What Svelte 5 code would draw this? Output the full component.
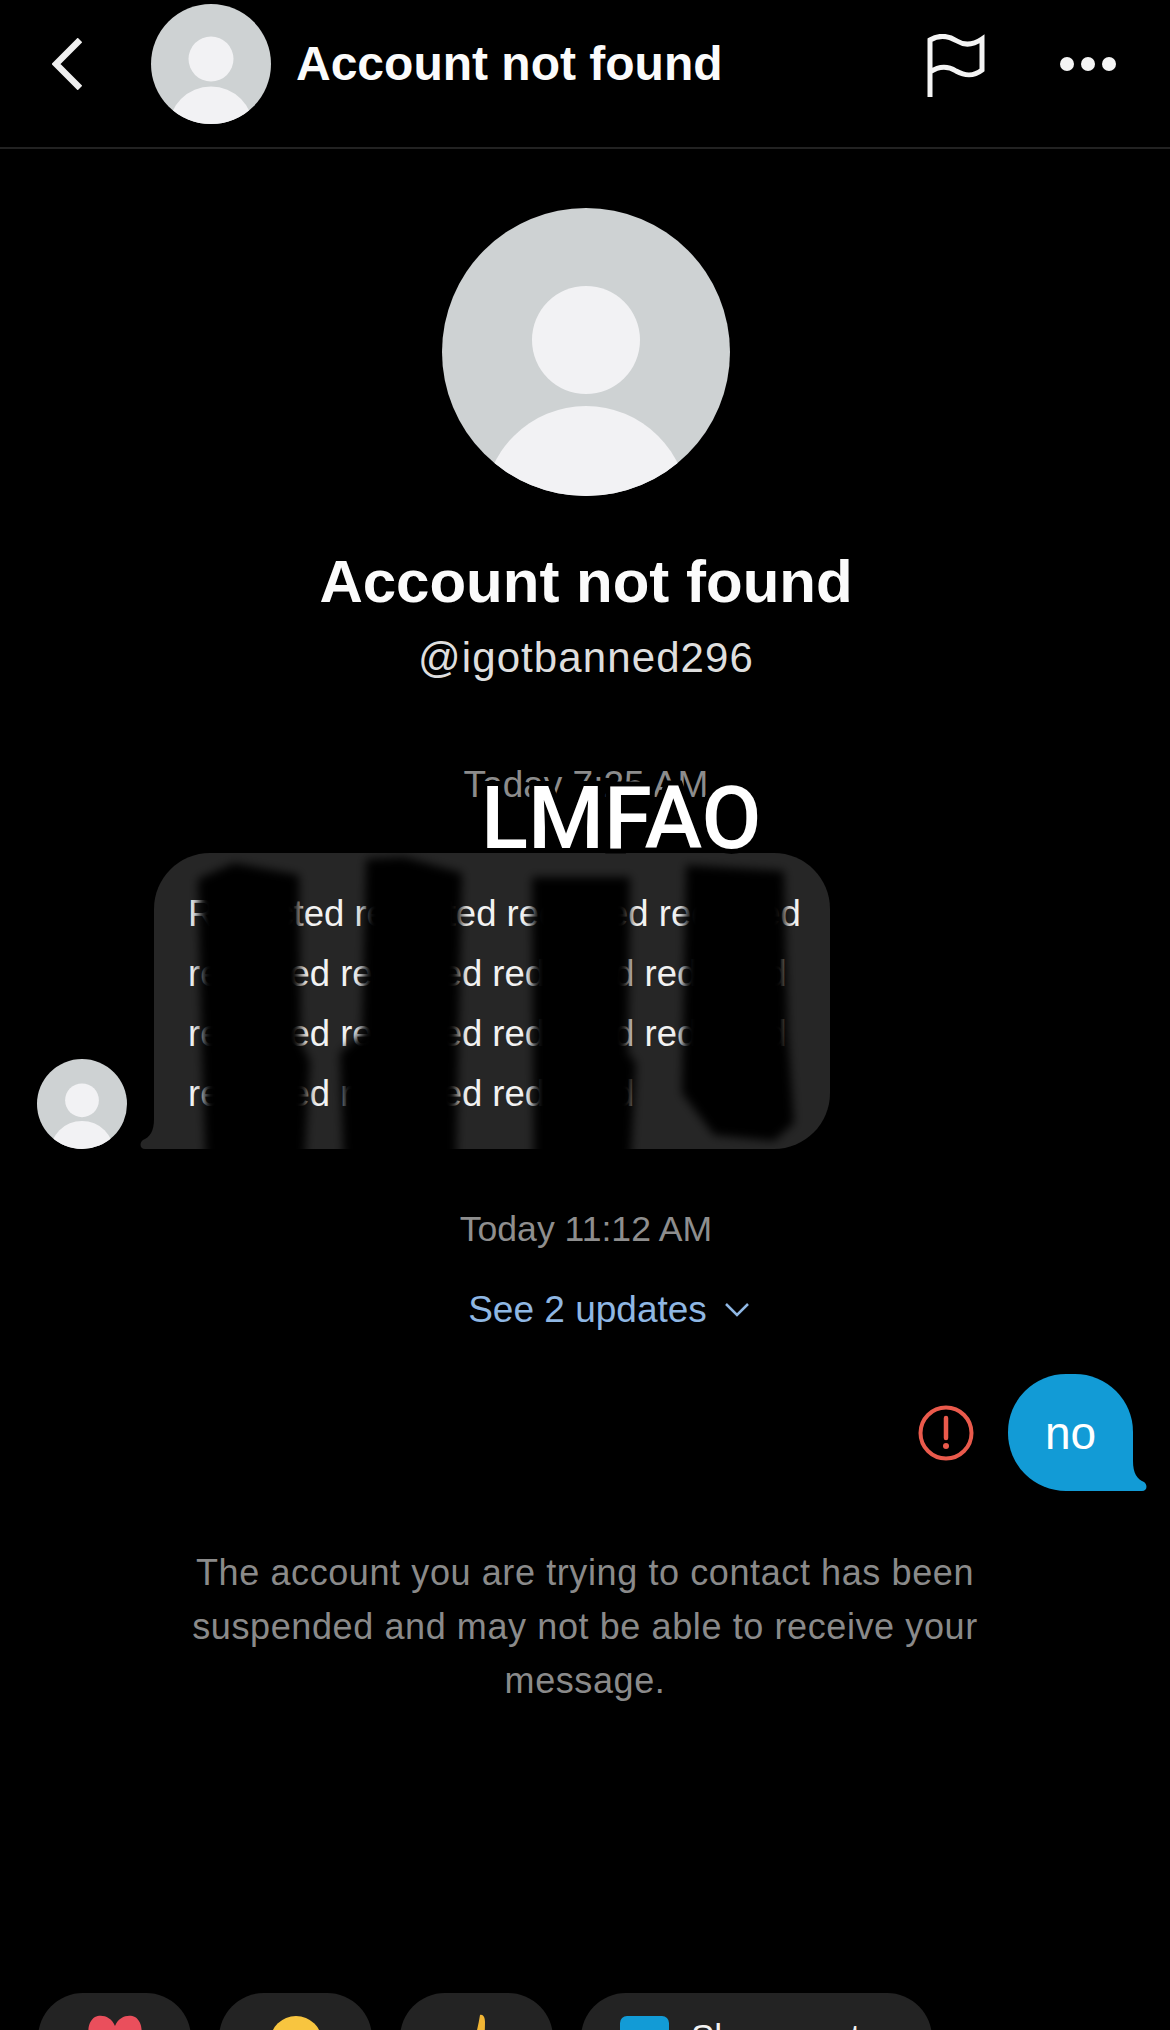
<script>
  // the repeated word in the received message is masked on purpose
  const lines = [
    'Redacted redacted redacted redacted',
    'redacted redacted redacted redacted',
    'redacted redacted redacted redacted',
    'redacted redacted redacted'
  ];
</script>

<div class="page">
  <header class="topbar">
    <svg class="back" viewBox="0 0 30 52" width="30" height="52" fill="none" stroke="#efefef" stroke-width="6.5">
      <path d="M28 2 L4 26 L28 50" />
    </svg>
    <svg class="avatar-sm" viewBox="0 0 288 288" width="120" height="120">
      <circle cx="144" cy="144" r="144" fill="#ced2d3" />
      <circle cx="144" cy="132" r="54" fill="#f2f2f4" />
      <clipPath id="clip-top"><circle cx="144" cy="144" r="144" /></clipPath>
      <circle cx="144" cy="300" r="102" fill="#f2f2f4" clip-path="url(#clip-top)" />
    </svg>
    <h1 class="topbar-title">Account not found</h1>
    <svg class="flag" viewBox="0 0 58 64" width="58" height="64" fill="none" stroke="#f4f4f4" stroke-width="5">
      <path d="M3 63 V6 C13 0 22 2 30 7 C38 12 46 11 55 5 V36 C46 43 38 42 29 37 C21 32 12 32 3 38" />
    </svg>
    <div class="dots"><span></span><span></span><span></span></div>
  </header>

  <section class="profile">
    <svg class="avatar-lg" viewBox="0 0 288 288" width="288" height="288">
      <circle cx="144" cy="144" r="144" fill="#ced2d3" />
      <circle cx="144" cy="132" r="54" fill="#f2f2f4" />
      <clipPath id="clip-main"><circle cx="144" cy="144" r="144" /></clipPath>
      <circle cx="144" cy="300" r="102" fill="#f2f2f4" clip-path="url(#clip-main)" />
    </svg>
    <h2 class="name">Account not found</h2>
    <p class="handle">@igotbanned296</p>
  </section>

  <section class="thread">
    <p class="stamp first">Today 7:25 AM</p>

    <div class="incoming">
      <svg class="avatar-xs" viewBox="0 0 288 288" width="90" height="90">
        <circle cx="144" cy="144" r="144" fill="#ced2d3" />
        <circle cx="144" cy="132" r="54" fill="#f2f2f4" />
        <clipPath id="clip-xs"><circle cx="144" cy="144" r="144" /></clipPath>
        <circle cx="144" cy="300" r="102" fill="#f2f2f4" clip-path="url(#clip-xs)" />
      </svg>
      <div class="bubble-in">
        <svg class="tail-in" viewBox="0 0 30 30" width="30" height="30">
          <path d="M14 0 C14 12 10 18 3 21 C-1 24 0 30 5 30 H30 V0 Z" fill="#262626" />
        </svg>
        {#each lines as line}
          <div class="msg-line">{line}</div>
        {/each}
        <svg class="scribble" viewBox="0 0 676 296" width="676" height="296">
          <defs>
            <filter id="soft"><feGaussianBlur stdDeviation="5" /></filter>
            <clipPath id="bubble-clip"><rect width="676" height="296" /></clipPath>
          </defs>
          <g clip-path="url(#bubble-clip)">
            <g filter="url(#soft)" fill="#000">
              <path d="M44 26 L80 10 L145 22 L147 190 L156 208 L150 320 L52 320 L48 200 Z" />
              <path d="M212 6 L250 4 L308 20 L304 210 L302 320 L190 320 L186 200 L208 180 Z" />
              <path d="M378 24 L476 24 L474 200 L482 210 L476 320 L380 320 Z" />
              <path d="M532 12 L630 18 L634 180 L640 270 L620 288 L560 282 L528 240 Z" />
            </g>
          </g>
        </svg>
      </div>
    </div>

    <span class="sticker">LMFAO</span>

    <p class="stamp second">Today 11:12 AM</p>
    <div class="updates">
      <span>See 2 updates</span>
      <svg viewBox="0 0 26 16" width="26" height="16" fill="none" stroke="#8fb7e3" stroke-width="2.5">
        <path d="M2 2 L13 13 L24 2" />
      </svg>
    </div>

    <div class="outgoing">
      <svg class="error" viewBox="0 0 56 56" width="56" height="56">
        <circle cx="28" cy="28" r="25.5" fill="none" stroke="#ea5a4c" stroke-width="4" />
        <path d="M28 13 V33" stroke="#ea5a4c" stroke-width="4.5" stroke-linecap="round" />
        <circle cx="28" cy="41" r="3" fill="#ea5a4c" />
      </svg>
      <div class="bubble-out">
        no
        <svg class="tail-out" viewBox="0 0 30 30" width="30" height="30">
          <path d="M16 0 C16 12 20 18 27 21 C31 24 30 30 25 30 H0 V0 Z" fill="#129bd6" />
        </svg>
      </div>
    </div>

    <p class="notice">
      The account you are trying to contact has been<br />
      suspended and may not be able to receive your<br />
      message.
    </p>
  </section>

  <footer class="chips">
    <div class="chip emoji">
      <svg viewBox="0 0 56 40" width="56" height="40">
        <path d="M28 12 C24 2 14 0 8 3 C0 8 0 20 4 30 L14 40 H42 L52 30 C56 20 56 8 48 3 C42 0 32 2 28 12 Z" fill="#ea4f5c" />
      </svg>
    </div>
    <div class="chip emoji">
      <svg viewBox="0 0 52 40" width="52" height="40">
        <circle cx="26" cy="28" r="26" fill="#f8c53f" />
        <path d="M8 30 Q15 21 22 30 M30 30 Q37 21 44 30" stroke="#6b4a14" stroke-width="3" fill="none" />
      </svg>
    </div>
    <div class="chip emoji">
      <svg viewBox="0 0 24 40" width="24" height="40">
        <path d="M15 1 C18 0 20 3 20 8 C20 18 19 30 17 40 H4 C9 30 13 14 15 1 Z" fill="#f1b534" />
      </svg>
    </div>
    <div class="chip share">
      <span class="share-icon"></span>
      <span>Share post</span>
    </div>
  </footer>
</div>

<style>
  :global(body) {
    margin: 0;
    background: #000;
  }

  .page {
    height: 2030px;
    overflow: hidden;
    background: #000;
    color: #fff;
    font-family: 'Liberation Sans', Arial, sans-serif;
    display: flex;
    flex-direction: column;
  }

  .topbar {
    height: 149px;
    box-sizing: border-box;
    border-bottom: 2px solid #222;
    display: flex;
    align-items: flex-start;
    padding: 4px 54px 0 52px;
  }

  .back {
    margin-top: 34px;
  }

  .avatar-sm {
    margin-left: 69px;
  }

  .topbar-title {
    margin: 32px 0 0 25px;
    font-size: 48px;
    line-height: 56px;
    font-weight: 700;
    color: #fbfbfb;
    flex: 1;
  }

  .flag {
    margin-top: 30px;
  }

  .dots {
    display: flex;
    gap: 7px;
    margin: 53px 0 0 75px;
  }

  .dots span {
    width: 14px;
    height: 14px;
    border-radius: 50%;
    background: #f4f4f4;
  }

  .profile {
    display: flex;
    flex-direction: column;
    align-items: center;
    padding-top: 59px;
    padding-left: 2px;
  }

  .avatar-lg {
    display: block;
  }

  .name {
    margin: 51px 0 0;
    font-size: 60px;
    line-height: 70px;
    font-weight: 700;
    color: #fbfbfb;
  }

  .handle {
    margin: 16px 0 0;
    font-size: 42px;
    line-height: 50px;
    letter-spacing: 1.1px;
    color: #dedede;
  }

  .thread {
    position: relative;
  }

  .stamp {
    margin: 0;
    text-align: center;
    font-size: 35px;
    line-height: 42px;
    color: #8c8c8c;
  }

  .stamp.first {
    margin-top: 81px;
    padding-left: 2px;
    font-size: 37px;
  }

  .sticker {
    position: absolute;
    left: 481px;
    top: 85px;
    font-family: Roboto, 'Liberation Sans', sans-serif;
    font-size: 87px;
    line-height: 100px;
    font-weight: 500;
    color: #fff;
    -webkit-text-stroke: 10px #000;
    paint-order: stroke fill;
  }

  .incoming {
    display: flex;
    align-items: flex-end;
    margin-top: 47px;
    padding-left: 37px;
  }

  .avatar-xs {
    display: block;
  }

  .bubble-in {
    position: relative;
    width: 676px;
    height: 296px;
    box-sizing: border-box;
    margin-left: 27px;
    padding: 31px 0 0 34px;
    background: #262626;
    border-radius: 56px 56px 56px 0;
  }

  .tail-in {
    position: absolute;
    left: -14px;
    bottom: 0;
  }

  .msg-line {
    position: relative;
    font-size: 36.5px;
    line-height: 60px;
    white-space: nowrap;
    color: #f2f2f2;
  }

  .scribble {
    position: absolute;
    left: 0;
    top: 0;
  }

  .stamp.second {
    margin-top: 59px;
    padding-left: 2px;
    font-size: 35.6px;
    color: #8e8e8e;
  }

  .updates {
    display: flex;
    justify-content: center;
    align-items: center;
    gap: 17px;
    margin-top: 39px;
    padding-left: 48px;
    font-size: 37px;
    line-height: 42px;
    color: #8fb7e3;
  }

  .outgoing {
    display: flex;
    justify-content: flex-end;
    align-items: center;
    gap: 34px;
    margin-top: 43px;
    padding-right: 37px;
  }

  .bubble-out {
    position: relative;
    width: 125px;
    height: 117px;
    box-sizing: border-box;
    padding-top: 32px;
    text-align: center;
    font-size: 46px;
    line-height: 54px;
    background: #129bd6;
    border-radius: 58px 58px 0 58px;
  }

  .tail-out {
    position: absolute;
    right: -14px;
    bottom: 0;
  }

  .notice {
    margin: 55px 0 0;
    text-align: center;
    font-size: 36px;
    line-height: 54px;
    letter-spacing: 0.6px;
    color: #8a8a8a;
  }

  .chips {
    margin-top: auto;
    height: 37px;
    display: flex;
    gap: 28px;
    padding-left: 38px;
  }

  .chip {
    height: 90px;
    background: #232323;
    border-radius: 46px;
    display: flex;
    box-sizing: border-box;
  }

  .chip.emoji {
    width: 153px;
    justify-content: center;
    padding-top: 21px;
  }

  .chip.share {
    width: 351px;
    padding: 23px 0 0 39px;
    gap: 22px;
    font-size: 35px;
    line-height: 42px;
    color: #f2f2f2;
  }

  .share-icon {
    width: 49px;
    height: 49px;
    border-radius: 7px;
    background: #129bd6;
  }
</style>
